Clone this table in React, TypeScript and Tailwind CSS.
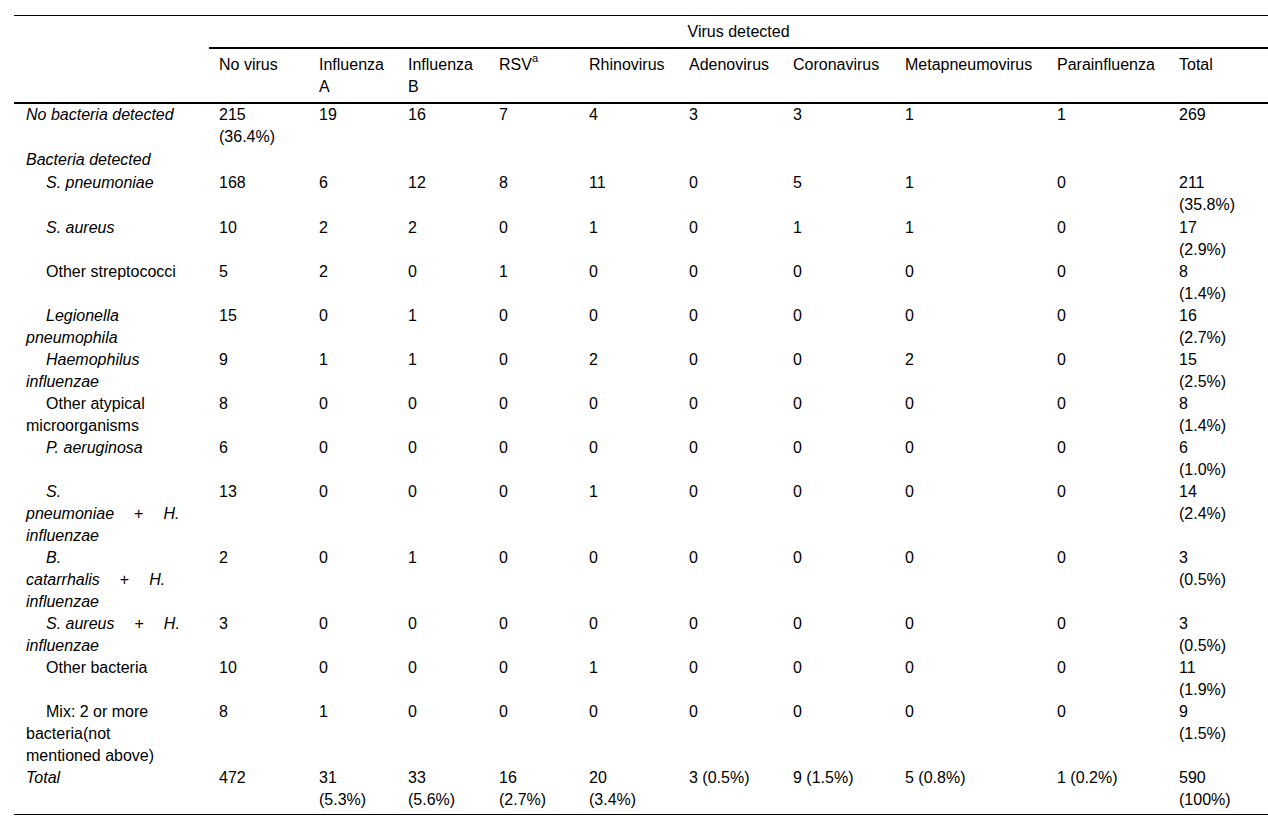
import React from "react";

const widths = [195, 100, 89, 91, 90, 100, 104, 112, 152, 122, 99];

type Row = {
  label: React.ReactNode;
  italic?: boolean;
  indent?: boolean;
  cells: string[];
};

const plus = <span className="mx-[20px] not-italic">+</span>;

const rows: Row[] = [
  { label: "No bacteria detected", italic: true, cells: ["215\n(36.4%)", "19", "16", "7", "4", "3", "3", "1", "1", "269"] },
  { label: "Bacteria detected", italic: true, cells: ["", "", "", "", "", "", "", "", "", ""] },
  { label: "S. pneumoniae", italic: true, indent: true, cells: ["168", "6", "12", "8", "11", "0", "5", "1", "0", "211\n(35.8%)"] },
  { label: "S. aureus", italic: true, indent: true, cells: ["10", "2", "2", "0", "1", "0", "1", "1", "0", "17\n(2.9%)"] },
  { label: "Other streptococci", indent: true, cells: ["5", "2", "0", "1", "0", "0", "0", "0", "0", "8\n(1.4%)"] },
  {
    label: (
      <>
        Legionella
        <br />
        pneumophila
      </>
    ),
    italic: true,
    indent: true,
    cells: ["15", "0", "1", "0", "0", "0", "0", "0", "0", "16\n(2.7%)"],
  },
  {
    label: (
      <>
        Haemophilus
        <br />
        influenzae
      </>
    ),
    italic: true,
    indent: true,
    cells: ["9", "1", "1", "0", "2", "0", "0", "2", "0", "15\n(2.5%)"],
  },
  {
    label: (
      <>
        Other atypical
        <br />
        microorganisms
      </>
    ),
    indent: true,
    cells: ["8", "0", "0", "0", "0", "0", "0", "0", "0", "8\n(1.4%)"],
  },
  { label: "P. aeruginosa", italic: true, indent: true, cells: ["6", "0", "0", "0", "0", "0", "0", "0", "0", "6\n(1.0%)"] },
  {
    label: (
      <>
        S.
        <br />
        pneumoniae{plus}H.
        <br />
        influenzae
      </>
    ),
    italic: true,
    indent: true,
    cells: ["13", "0", "0", "0", "1", "0", "0", "0", "0", "14\n(2.4%)"],
  },
  {
    label: (
      <>
        B.
        <br />
        catarrhalis{plus}H.
        <br />
        influenzae
      </>
    ),
    italic: true,
    indent: true,
    cells: ["2", "0", "1", "0", "0", "0", "0", "0", "0", "3\n(0.5%)"],
  },
  {
    label: (
      <>
        S. aureus{plus}H.
        <br />
        influenzae
      </>
    ),
    italic: true,
    indent: true,
    cells: ["3", "0", "0", "0", "0", "0", "0", "0", "0", "3\n(0.5%)"],
  },
  { label: "Other bacteria", indent: true, cells: ["10", "0", "0", "0", "1", "0", "0", "0", "0", "11\n(1.9%)"] },
  {
    label: (
      <>
        Mix: 2 or more
        <br />
        bacteria(not
        <br />
        mentioned above)
      </>
    ),
    indent: true,
    cells: ["8", "1", "0", "0", "0", "0", "0", "0", "0", "9\n(1.5%)"],
  },
  {
    label: "Total",
    italic: true,
    cells: ["472", "31\n(5.3%)", "33\n(5.6%)", "16\n(2.7%)", "20\n(3.4%)", "3 (0.5%)", "9 (1.5%)", "5 (0.8%)", "1 (0.2%)", "590\n(100%)"],
  },
];

function Lines({ text }: { text: string }) {
  const parts = text.split("\n");
  return (
    <>
      {parts.map((p, i) => (
        <React.Fragment key={i}>
          {i > 0 && <br />}
          {p}
        </React.Fragment>
      ))}
    </>
  );
}

const heads: React.ReactNode[] = [
  "No virus",
  <>
    Influenza
    <br />A
  </>,
  <>
    Influenza
    <br />B
  </>,
  <>
    RSV<sup className="relative top-[-1px] align-top text-[11px] leading-none">a</sup>
  </>,
  "Rhinovirus",
  "Adenovirus",
  "Coronavirus",
  "Metapneumovirus",
  "Parainfluenza",
  "Total",
];

export default function App() {
  return (
    <div className="min-h-screen bg-white pt-[15px] pl-[14px] font-['Liberation_Sans',Arial,sans-serif] text-[16px] leading-[22px] text-black">
      <table className="w-[1254px] table-fixed border-collapse border-t border-b border-black">
        <colgroup>
          {widths.map((w, i) => (
            <col key={i} style={{ width: w }} />
          ))}
        </colgroup>
        <thead>
          <tr>
            <th className="pt-[5px] pb-[4px]" />
            <th colSpan={10} className="border-b-2 border-black pt-[5px] pb-[4px] text-center font-normal">
              Virus detected
            </th>
          </tr>
          <tr className="border-b-2 border-black">
            <th className="pt-[5px] pb-[4px]" />
            {heads.map((h, i) => (
              <th key={i} className="pt-[5px] pb-[4px] pl-[10px] text-left align-top font-normal">
                {h}
              </th>
            ))}
          </tr>
        </thead>
        <tbody>
          {rows.map((r, i) => {
            const last = i === rows.length - 1;
            const pad = last ? "pb-[3px]" : i > 0 && i < 4 ? "pt-[1px]" : "";
            return (
              <tr key={i}>
                <td className={`pl-[12px] pr-[10px] align-top whitespace-nowrap ${pad} ${r.italic ? "italic" : ""}`}>
                  <div className={r.indent ? "indent-[20px]" : ""}>{r.label}</div>
                </td>
                {r.cells.map((c, j) => (
                  <td key={j} className={`pl-[10px] align-top whitespace-nowrap ${pad}`}>
                    <Lines text={c} />
                  </td>
                ))}
              </tr>
            );
          })}
        </tbody>
      </table>
    </div>
  );
}
